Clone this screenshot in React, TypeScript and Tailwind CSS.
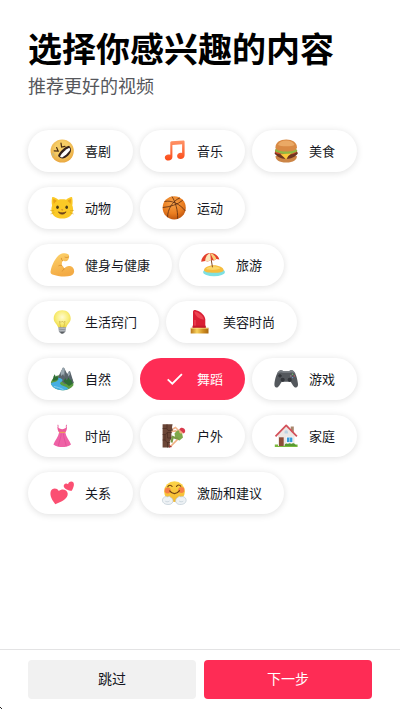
import { useState } from 'react';
import type { ReactNode } from 'react';
import clsx from 'clsx';

interface Interest {
	id: string;
	label: string;
	icon: ReactNode;
}

const INTERESTS: Interest[] = [
	{
		id: 'comedy',
		label: '喜剧',
		icon: (
			<>
				<defs>
					<radialGradient id="rofl" cx="0.5" cy="0.4" r="0.6">
						<stop offset="0.5" stopColor="#f6cd66" />
						<stop offset="1" stopColor="#e9a63e" />
					</radialGradient>
				</defs>
				<circle cx="12.2" cy="12" r="11.6" fill="url(#rofl)" />
				<path d="M4.2 11.8l4 .2-1.6-3.4M11 4.2l.6 3.900 3.400-.7" fill="none" stroke="#4a2c10" strokeWidth="1.200" strokeLinecap="round" />
				<g transform="rotate(-43 14.5 13)">
					<path d="M7 11.600C10 9.400 19 9.400 22 11.600c.3 4.400-3 6.600-7.500 6.600S6.700 16 7 11.600z" fill="#33211b" />
					<path d="M8.200 13.200c3.600-1.200 9-1.200 12.600 0 0 .9-.3 1.700-.8 2.200-3.200.8-7.800.8-11 0-.5-.5-.8-1.300-.8-2.200z" fill="#fff" />
				</g>
				<path d="M1.600 14c1.800-.6 3 .4 2.800 2-.1 1-.9 1.700-1.500 1.400C2 16.500 1.600 15 1.600 14z" fill="#b9b98a" opacity=".6" />
			</>
		),
	},
	{
		id: 'music',
		label: '音乐',
		icon: (
			<>
				<defs>
					<linearGradient id="notes" x1="0" y1="0" x2="0" y2="1">
						<stop offset="0" stopColor="#ff9468" />
						<stop offset="1" stopColor="#fb4a17" />
					</linearGradient>
				</defs>
				<path
					d="M8.3 3.6c0-.8.5-1.2 1.2-1.3l11.8-.8c.8 0 1.3.4 1.3 1.2v13.5c0 2.200-1.700 3.700-4 3.700-2 0-3.500-1.200-3.500-3s1.600-3.200 3.600-3.200c.6 0 1 .1 1.400.3V5.300l-9.700.8v12c0 2.100-1.700 3.500-3.900 3.500-2.100 0-3.700-1.200-3.700-3.100 0-1.800 1.600-3.100 3.600-3.100.8 0 1.400.1 1.900.4z"
					fill="url(#notes)"
				/>
			</>
		),
	},
	{
		id: 'food',
		label: '美食',
		icon: (
			<>
				<path d="M1.500 17c0 4 3.500 6.500 10.700 6.500S22.900 21 22.900 17z" fill="#cc8546" />
				<path d="M.5 14.200c2 3.300 6.500 5.600 11.700 5.600s9.700-2.300 11.700-5.600l-1-2H1.500z" fill="#6d3521" />
				<path d="M1 13.800c3 2 5 1 7 2.200s2.500 1.500 4 1.200 2.500-2.400 5-2 4-1 6-2.200l-1-3.500H1.800z" fill="#d8452c" />
				<path d="M.8 11.500c1.500 2.500 3 1.600 4.500 2.600 1.800 1.200 3 .2 4.700 1 2.300 1 3.800-.7 5.800-.2 2.600.6 3.400-1.300 5-1.400 1.400-.2 2-1 2.600-2L20 8.500H3z" fill="#8fb944" />
				<path d="M6.500 15.200l11-.6-3.200 2.400-2.100 3.500-2.600-2.600z" fill="#fcc93b" />
				<path d="M1.500 8.200C1.500 3.500 6 .5 12.200.5s10.700 3 10.700 7.700c0 2.600-4 4.400-10.700 4.400S1.500 10.800 1.500 8.200z" fill="#d98a44" />
				<path d="M4 5.800C5.500 3 8.500 1.600 12.200 1.600S19 3 20.500 5.800c-2 2-14.500 2-16.500 0z" fill="#eaa965" />
			</>
		),
	},
	{
		id: 'animals',
		label: '动物',
		icon: (
			<>
				<path
					d="M2.200 1.200C3 .3 6.800 2.200 8.300 3.800c2.400-.6 5.400-.6 7.800 0C17.600 2.200 21.400.3 22.100 1.200c.6 1.800.7 6 .2 8.400.6 1.400.8 2.800.7 4.600C23 19 18.500 22.500 12.200 22.500S1.400 19 1.400 14.200c-.1-1.800.1-3.200.7-4.600-.6-2.400-.5-6.600.1-8.400z"
					fill="#fbc926"
				/>
				<path d="M3.300 2.900c1.300.3 2.600 1.100 3.500 2-1.200.8-2.200 1.800-2.900 3-.5-1.500-.8-3.500-.6-5zM21 2.900c-1.300.3-2.600 1.100-3.500 2 1.200.8 2.200 1.800 2.900 3 .5-1.500.8-3.500.6-5z" fill="#eaa318" />
				<ellipse cx="7.500" cy="11.300" rx="1.300" ry="1.800" fill="#493a17" />
				<ellipse cx="16.700" cy="11.300" rx="1.300" ry="1.800" fill="#493a17" />
				<path d="M11 13.500h2.300l-1.100 1.300z" fill="#c2683a" />
				<path d="M8.300 15.800c1 1.900 2.400 2.400 3.900 2.400s2.900-.5 3.900-2.400c-2.400 1.300-5.400 1.300-7.800 0z" fill="#6d421b" stroke="#6d421b" strokeWidth=".6" />
				<path d="M0 14.300l4.200.5M.6 18l3.800-1.400M24 14.300l-4 .5M23.600 18l-3.700-1.400" stroke="#c99413" strokeWidth=".5" />
			</>
		),
	},
	{
		id: 'sports',
		label: '运动',
		icon: (
			<>
				<defs>
					<radialGradient id="ball" cx="0.45" cy="0.3" r="0.75">
						<stop offset="0" stopColor="#f7a44b" />
						<stop offset="0.6" stopColor="#ea7d20" />
						<stop offset="1" stopColor="#b9500d" />
					</radialGradient>
				</defs>
				<circle cx="12.2" cy="11.8" r="11.6" fill="url(#ball)" />
				<g fill="none" stroke="#5b2b10" strokeWidth=".8">
					<path d="M.8 11.500C7.500 11 16 8.500 20.800 4.200" />
					<path d="M10 .5c3.500 5.500 6 14 5.600 22.300" />
					<path d="M2.500 5.500c7-1.600 15.500 2.500 20.900 9.500" />
					<path d="M5.600 21.200C5.500 13.500 10.500 5 18 1.800" />
				</g>
			</>
		),
	},
	{
		id: 'fitness',
		label: '健身与健康',
		icon: (
			<>
				<defs>
					<linearGradient id="arm" x1="0" y1="0" x2="0.3" y2="1">
						<stop offset="0" stopColor="#fdd36b" />
						<stop offset="1" stopColor="#f3ab45" />
					</linearGradient>
				</defs>
				<path
					d="M9.800 1.600C11.800.2 15.500-.1 17.600.9c1.500.7 1.800 2.300 1.300 4.200-.4 1.700-1.500 3.200-3.200 3.200-1.500.1-2.200-.6-3-.4-.9.500-1 2.900-.7 4.800 1.300.7 2 1.700 2.200 2.800 1.600-2.300 4.300-3.100 6.700-2.200 2.300.9 3.400 3 3.200 5.500-.2 2-1.300 3.300-3.300 3.900-4.800 1.300-13 .8-18.400-1.300C.9 20.800.3 19.700.6 18.200 1.700 12 5.500 4.600 9.800 1.600z"
					fill="url(#arm)"
				/>
				<path d="M12.700 7.900c-.8-.6-1.300-1.500-1.300-2.600M14.200 15.500c-.3 1.300-1 2-2 2.500M15 4.200c1 .5 2.600.4 3.600-.2M12 12.700c-1-.5-2.200-.5-3.200 0" fill="none" stroke="#cf8527" strokeWidth=".7" strokeLinecap="round" />
			</>
		),
	},
	{
		id: 'travel',
		label: '旅游',
		icon: (
			<>
				<ellipse cx="13" cy="19" rx="11" ry="4.300" fill="#7de0e2" />
				<path d="M3 17.300c0-2.600 4.500-5 9.600-5 5.500 0 10 2.400 10 4.900 0 1.800-4.200 2.600-9.800 2.600S3 19 3 17.300z" fill="#f6bd3d" />
				<path d="M5 16c1.500-2 5-2.800 8-2.700 2.800.1 5.200 1 6.300 2.200-3.300 1.600-10.300 1.900-14.300.5z" fill="#fbd768" />
				<path d="M9.400 2l2.100 12.300" stroke="#8a4f28" strokeWidth="1" />
				<path d="M.2 8.800C.4 4 4.500.2 9.200.1c4.300-.2 8.200 2.600 9.200 6.500l-3-.7-2.500 1.700-3-.5-3 1.400-2.700-.6z" fill="#e33f2b" />
				<path d="M9.200.1C6 1.500 4.200 4.200 4.200 7.900l2.700.6 3-1.400z" fill="#fbe6b8" />
				<path d="M9.200.1c2.800.8 5.400 3 6.200 5.800l-2.500 1.700z" fill="#f9cf7a" />
			</>
		),
	},
	{
		id: 'life-hacks',
		label: '生活窍门',
		icon: (
			<>
				<defs>
					<radialGradient id="bulb" cx="0.5" cy="0.4" r="0.6">
						<stop offset="0" stopColor="#fffbd0" />
						<stop offset="0.6" stopColor="#f9ee7b" />
						<stop offset="1" stopColor="#eed943" />
					</radialGradient>
				</defs>
				<path d="M12.200.3c5 0 8.500 3.500 8.500 8.100 0 4.300-3.600 5.600-4.500 9.200H8.200C7.300 14 3.700 12.700 3.700 8.400 3.700 3.800 7.200.3 12.200.3z" fill="url(#bulb)" />
				<path d="M10.700 17.500L9.300 11.300l1.900 1 1-1.200 1 1.200 1.900-1-1.400 6.200" fill="none" stroke="#c9ad3c" strokeWidth=".6" />
				<path d="M8.300 17.200h7.800l-.6 4c-.4 1.400-1.800 2.400-3.300 2.400s-2.900-1-3.300-2.400z" fill="#8d9297" />
				<path d="M8.500 18.900l7.400-.6M8.800 20.800l6.900-.6" stroke="#c9cdd1" strokeWidth=".7" />
				<path d="M10.300 22.300h3.800c-.4.800-1.100 1.300-1.900 1.300s-1.500-.5-1.900-1.300z" fill="#4a4d52" />
			</>
		),
	},
	{
		id: 'beauty',
		label: '美容时尚',
		icon: (
			<>
				<defs>
					<linearGradient id="gold" x1="0" y1="0" x2="1" y2="0">
						<stop offset="0" stopColor="#b87416" />
						<stop offset="0.35" stopColor="#f8d25e" />
						<stop offset="0.7" stopColor="#cf8f22" />
						<stop offset="1" stopColor="#a9660f" />
					</linearGradient>
				</defs>
				<path d="M5 17.500V2C5 .4 6.200-.2 8 .2c4.500 1.200 9 5 9.300 9.300v8z" fill="#d91f35" />
				<path d="M6.400 1.600c3.800.4 8.700 4 9.500 7.800-4.400.2-8.700-3-9.500-7.800z" fill="#ee4553" />
				<path d="M7 10v7" stroke="#f0495a" strokeWidth="1.200" />
				<path d="M4.500 15.700h13.300v3H4.500z" fill="#c4182d" />
				<path d="M2.700 17.800h17.800v5.700H2.700z" fill="url(#gold)" />
				<path d="M2.700 18.400h17.800" stroke="#ffe896" strokeWidth=".6" />
			</>
		),
	},
	{
		id: 'nature',
		label: '自然',
		icon: (
			<>
				<path d="M.8 16C2 11 5 10 8 8.500L14 7l7 3c2 3 2.800 6 2.300 8.500C21 21.500 17 23.500 12.500 23.300 6 23 1.500 20 .8 16z" fill="#5c9e42" />
				<path d="M7.500 11L13 .6l1.200.3 3 6 2-3 1 .6 3.600 11.500-9 1z" fill="#59646c" />
				<path d="M13 .6l-2.600 5 .8 3.400 2-2 1 2.800L14.700 2zM19.200 3.900l-1.600 2.600.8 3 1.500-2z" fill="#9aa8b1" />
				<path d="M5.500 10.500c3.500.3 7.500 1 7 3-.4 1.500-3 1.800-2.400 3.300.6 1.700 5.800 2.400 8.400 4.900-4.500 2.500-10.500 2-14.500-.9C2 19 1 17.700 1 16c2-.8 5.800-1.300 6.600-2.600.5-1-1.600-1.600-2.100-2.900z" fill="#45afe2" />
				<path d="M4 19.500c3 .5 6 1.400 9.500 3.200" stroke="#91d8f3" strokeWidth=".8" fill="none" />
				<path d="M2.500 14l1-4.500 1.200-2.300 1.300 3 1-2 1.500 4-2 1zM13.500 14.500l1.700-3.500 1.600 2.400 1.700-3.200 1.600 3 1-1 1.600 4.500-3.700 2.200z" fill="#2e6d35" />
			</>
		),
	},
	{
		id: 'dance',
		label: '舞蹈',
		icon: <path d="M5.700 12.400l4.600 4.300L19.900 7.200" fill="none" stroke="currentColor" strokeWidth="1.800" />,
	},
	{
		id: 'gaming',
		label: '游戏',
		icon: (
			<>
				<path
					d="M5.300 3.800c1.500-.6 3-.7 4 .5h5.800c1-1.200 2.500-1.100 4-.5 2.300 1 4.600 8.700 4.900 13.200.1 2.200-.7 3.600-2.100 3.600-2.300 0-3.600-3.800-5.400-5.900H7.900c-1.800 2.100-3.100 5.900-5.400 5.900-1.400 0-2.200-1.400-2.100-3.600.3-4.500 2.600-12.200 4.900-13.200z"
					fill="#54585d"
				/>
				<path d="M5.300 3.800c1.500-.6 3-.7 4 .5h5.800c1-1.200 2.500-1.100 4-.5.8.4 1.600 1.600 2.400 3.200-2-1.600-4-1.800-5.600-1.200H8.500C7 5.200 5 5.400 2.900 7c.8-1.600 1.600-2.800 2.400-3.200z" fill="#7c8187" />
				<circle cx="8.700" cy="12.800" r="2.100" fill="#33363b" />
				<circle cx="15.700" cy="12.800" r="2.100" fill="#33363b" />
				<path d="M6 7v3.600M4.200 8.800h3.600" stroke="#2c2f33" strokeWidth="1.200" />
				<circle cx="18.600" cy="7.200" r=".7" fill="#6fbe67" />
				<circle cx="20.300" cy="8.900" r=".7" fill="#d95b63" />
				<circle cx="18.600" cy="10.600" r=".7" fill="#6d92dc" />
				<circle cx="16.900" cy="8.900" r=".7" fill="#b597ae" />
			</>
		),
	},
	{
		id: 'fashion',
		label: '时尚',
		icon: (
			<>
				<path d="M7.900.8c.2 1 .3 2 .1 3M16.500.8c-.2 1-.3 2-.1 3" fill="none" stroke="#e0458c" strokeWidth=".8" />
				<path d="M7.600 2.900c1.400 1.600 2.900 1.900 4.600 2.400 1.700-.5 3.200-.8 4.600-2.400.5 2.400-.6 4-1.500 5.700H9.100C8.200 6.900 7.100 5.300 7.600 2.900z" fill="#ee5a9b" />
				<path d="M9.100 8.600h6.200c.8 4.500 4.200 8 5.700 11.800-2.500 1.800-5.400 2.700-8.800 2.700s-6.300-.9-8.800-2.700c1.500-3.800 4.900-7.300 5.700-11.800z" fill="#ef62a6" />
				<path d="M11.200 9.500c-.2 4.500-2.200 8.500-3 12.800M13.400 9.500c.2 4.500 2.100 8.500 2.900 12.800" stroke="#dc4a8e" strokeWidth=".6" fill="none" />
				<path d="M9.100 7.800h6.200V9H9.100z" fill="#e7a15a" />
			</>
		),
	},
	{
		id: 'outdoors',
		label: '户外',
		icon: (
			<>
				<path d="M.6.300h10l-.6 3 1 3-1.700 3.500.4 4-2 4 .3 5.700H.6z" fill="#6b4637" />
				<path d="M.6 4.500h4l1.400 2h4.500M.6 10.500h3l1.500-2h4M3 10.500v5.500H.6M5.500 8.500v5.500h4M3 16l2 2.500h3M5.500 18.500v5M5 .3v4.200" stroke="#4a2d23" strokeWidth=".7" fill="none" />
				<path d="M9.500 7.500l4-.5 5 2.500" stroke="#f2b48b" strokeWidth="1.700" fill="none" />
				<path d="M12.500 9.500l3.500-4 3.700 2.500 1.300 5.500-3.500 3-4-1.500z" fill="#7fa94a" />
				<path d="M16.500 15l-5.800-2-1.200 5.500" stroke="#7a9a45" strokeWidth="2.200" fill="none" />
				<path d="M15.500 15.500L13 18l-4.500 4.500" stroke="#f0b083" strokeWidth="1.700" fill="none" />
				<path d="M16.500 6.500l-3-3L11 5" stroke="#f2b48b" strokeWidth="1.500" fill="none" />
				<path d="M7.600 21l2.600 2-3 .5z" fill="#a93434" />
				<circle cx="19.700" cy="7" r="2.600" fill="#f0b083" />
				<path d="M17.300 5.800c.8-2.200 3-2.500 4.600-1.300 1.900 1.400 1.700 4.200-.3 5-1.200-1.300-2.500-2.800-4.300-3.700z" fill="#d93a4c" />
			</>
		),
	},
	{
		id: 'home',
		label: '家庭',
		icon: (
			<>
				<path d="M.8 20.500h22.800V23H.8z" fill="#7bb93f" />
				<path d="M16.700 2.500h3.100v6h-3.100z" fill="#a9876d" />
				<path d="M4 11l8.200-8.500L20.500 11v11H4z" fill="#ece7e4" />
				<path d="M1.500 12.300L12.200 1.400l10.700 10.900" fill="none" stroke="#d4525b" strokeWidth="1.800" strokeLinejoin="round" />
				<path d="M5 13.300h4.700V22H5z" fill="#8c4d38" />
				<path d="M12.200 12.800h6.900v6h-6.900z" fill="#fff" />
				<path d="M12.900 13.500h5.500v4.600h-5.500z" fill="#339bd8" />
				<path d="M15.600 13.500v4.600" stroke="#d7effb" strokeWidth=".6" />
				<path d="M10.500 8a1.700 1.700 0 013.400 0v1.400h-3.400z" fill="#bcd3e2" />
				<path d="M10.800 20.500c1-1.500 2.500-1.200 3.200-.4 1-1.200 2.500-1 3.200 0 1-1 3-1.300 4 .4l1.800 1.500H10.500z" fill="#579b30" />
			</>
		),
	},
	{
		id: 'relationships',
		label: '关系',
		icon: (
			<>
				<path d="M5.300 23.200C2 19.300-.4 14.600.7 10.600c.9-3.600 6-4.600 8.200-.6 3.200-3 8.300-1.400 8.800 2.500.6 4.900-6.600 8.600-12.400 10.700z" fill="#fb4f72" />
				<path d="M21.800 9.800c-3.600-.4-7.200-1.700-8-4.100-.6-2.300 2-4.200 4.300-2.500C18.500.3 22-.5 23.400 1.600c1.300 2.200-.2 5.600-1.600 8.200z" fill="#fb4f72" />
			</>
		),
	},
	{
		id: 'advice',
		label: '激励和建议',
		icon: (
			<>
				<defs>
					<linearGradient id="hug" x1="0" y1="0" x2="0" y2="1">
						<stop offset="0" stopColor="#fcd448" />
						<stop offset="1" stopColor="#f5b92f" />
					</linearGradient>
				</defs>
				<circle cx="12.500" cy="10.600" r="10.400" fill="url(#hug)" />
				<circle cx="5.700" cy="9.500" r="3" fill="#f4674b" opacity=".75" />
				<circle cx="19.300" cy="9" r="3" fill="#f4674b" opacity=".75" />
				<path d="M5.800 5.700c.9-1.900 3.300-1.900 4.300-.2M14.500 5.400c.9-1.900 3.300-1.900 4.300-.1" fill="none" stroke="#714312" strokeWidth="1.100" strokeLinecap="round" />
				<path d="M7.700 9.900c2.600 3.700 7 3.600 9.800-.2" fill="none" stroke="#714312" strokeWidth="1.200" strokeLinecap="round" />
				<g fill="#eef2f5" stroke="#b4c2cc" strokeWidth=".6">
					<path d="M.6 18.200c.6-2.100 3-3.200 5.200-2.300 1.100-1 2.200-.8 2.600.3 1.900.8 3 2.500 2.500 4.500-.6 2.200-3 3.200-6 2.700-3.200-.4-5-2.700-4.300-5.200z" />
					<path d="M24 18.200c-.6-2.100-3-3.200-5.200-2.300-1.100-1-2.200-.8-2.600.3-1.900.8-3 2.500-2.500 4.500.6 2.200 3 3.200 6 2.700 3.200-.4 5-2.700 4.300-5.200z" />
				</g>
				<path d="M3.300 20.200c1.200.8 3 .8 4.200-.2M21.300 20.200c-1.200.8-3 .8-4.200-.2" fill="none" stroke="#b4c2cc" strokeWidth=".6" />
			</>
		),
	},
];

interface InterestChipProps {
	interest: Interest;
	selected: boolean;
	onToggle: () => void;
}

function InterestChip({ interest, selected, onToggle }: InterestChipProps) {
	return (
		<button
			type="button"
			aria-pressed={selected}
			onClick={onToggle}
			className={clsx(
				'flex h-[42px] items-center gap-[11px] rounded-full px-[22px] text-[13px] leading-5',
				selected ? 'bg-[#fe2c55] text-white' : 'bg-white text-[#161823] shadow-[0_1px_7px_rgba(0,0,0,0.13)]',
			)}
		>
			<svg viewBox="0 0 24 24" className="h-6 w-6 shrink-0 overflow-visible" aria-hidden="true">
				{interest.icon}
			</svg>
			{interest.label}
		</button>
	);
}

export default function App() {
	const [selected, setSelected] = useState<string[]>(['dance']);

	const toggle = (id: string) => {
		setSelected((prev) => (prev.includes(id) ? prev.filter((v) => v !== id) : [...prev, id]));
	};

	return (
		<div
			lang="zh-CN"
			className="flex min-h-screen flex-col overflow-hidden bg-white font-['Noto_Sans_CJK_SC',sans-serif] text-[#161823]"
		>
			<main className="flex-1 px-7 pt-[23px] pb-8">
				<h1 className="text-[34px] leading-[50px] font-bold text-black">选择你感兴趣的内容</h1>
				<p className="text-[18px] leading-6 text-[#56575c]">推荐更好的视频</p>
				<div className="mt-[33px] flex flex-wrap gap-x-[7px] gap-y-[15px]">
					{INTERESTS.map((interest) => (
						<InterestChip
							key={interest.id}
							interest={interest}
							selected={selected.includes(interest.id)}
							onToggle={() => toggle(interest.id)}
						/>
					))}
				</div>
			</main>

			<footer className="relative flex gap-2 border-t border-[#e3e3e4] px-7 pt-[10px] pb-[11px] text-[14px]">
				<button type="button" className="h-[39px] flex-1 rounded bg-[#f1f1f1] pb-0.5">
					跳过
				</button>
				<button type="button" className="h-[39px] flex-1 rounded bg-[#fe2c55] pb-0.5 text-white">
					下一步
				</button>
				<svg viewBox="0 0 3 4" className="absolute bottom-0 left-0 h-1 w-[3px]" aria-hidden="true">
					<path d="M0 1l2 2" stroke="#222" strokeWidth="1" />
				</svg>
			</footer>
		</div>
	);
}
